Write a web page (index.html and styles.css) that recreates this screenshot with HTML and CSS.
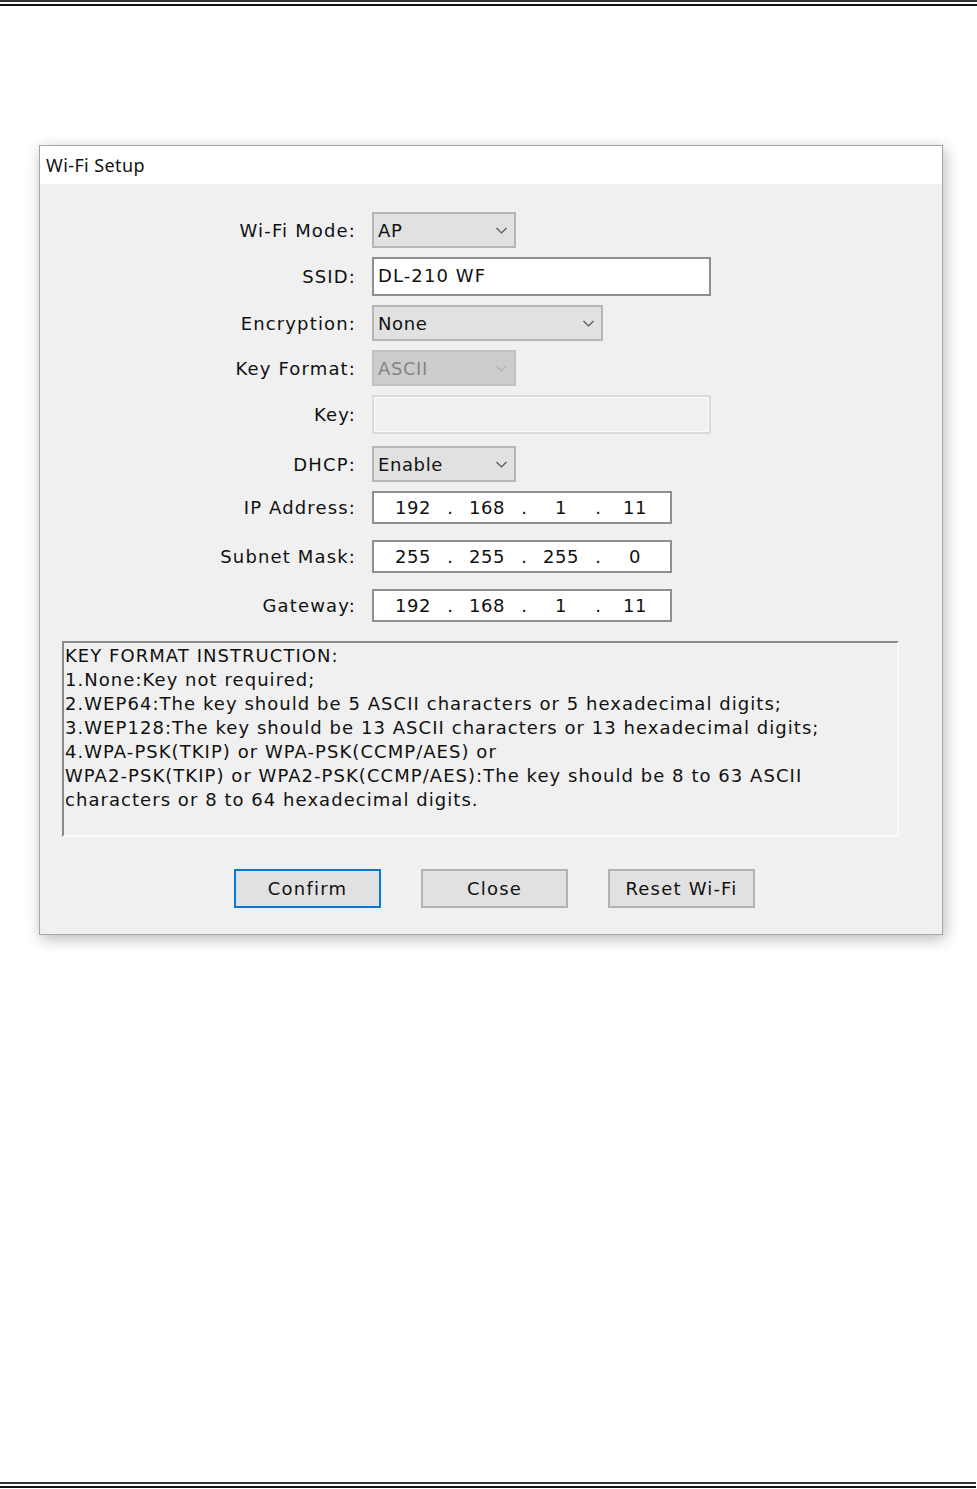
FILE: index.html
```html
<!DOCTYPE html>
<html lang="en">
<head>
    <meta charset="UTF-8">
    <meta name="viewport" content="width=device-width, initial-scale=1.0">
    <title>Wi-Fi Setup</title>
    <link rel="stylesheet" href="styles.css">
</head>
<body>
    <div class="rule rule-top"></div>

    <div class="dialog">
        <div class="title-bar">Wi-Fi Setup</div>
        <div class="dialog-body">
            <div class="form">
                <div class="row">
                    <label class="label">Wi-Fi Mode:</label>
                    <div class="select small"><span>AP</span><svg class="chev" viewBox="0 0 12 7"><path d="M1 1 L6 6 L11 1"/></svg></div>
                </div>
                <div class="row">
                    <label class="label">SSID:</label>
                    <div class="input wide">DL-210 WF</div>
                </div>
                <div class="row">
                    <label class="label">Encryption:</label>
                    <div class="select medium"><span>None</span><svg class="chev" viewBox="0 0 12 7"><path d="M1 1 L6 6 L11 1"/></svg></div>
                </div>
                <div class="row">
                    <label class="label">Key Format:</label>
                    <div class="select small disabled"><span>ASCII</span><svg class="chev" viewBox="0 0 12 7"><path d="M1 1 L6 6 L11 1"/></svg></div>
                </div>
                <div class="row">
                    <label class="label">Key:</label>
                    <div class="input wide disabled"></div>
                </div>
                <div class="row gap-lg">
                    <label class="label">DHCP:</label>
                    <div class="select small"><span>Enable</span><svg class="chev" viewBox="0 0 12 7"><path d="M1 1 L6 6 L11 1"/></svg></div>
                </div>
                <div class="row">
                    <label class="label">IP Address:</label>
                    <div class="ip">
                        <span class="seg">192</span><span class="dot">.</span>
                        <span class="seg">168</span><span class="dot">.</span>
                        <span class="seg">1</span><span class="dot">.</span>
                        <span class="seg">11</span>
                    </div>
                </div>
                <div class="row gap-ip">
                    <label class="label">Subnet Mask:</label>
                    <div class="ip">
                        <span class="seg">255</span><span class="dot">.</span>
                        <span class="seg">255</span><span class="dot">.</span>
                        <span class="seg">255</span><span class="dot">.</span>
                        <span class="seg">0</span>
                    </div>
                </div>
                <div class="row gap-ip">
                    <label class="label">Gateway:</label>
                    <div class="ip">
                        <span class="seg">192</span><span class="dot">.</span>
                        <span class="seg">168</span><span class="dot">.</span>
                        <span class="seg">1</span><span class="dot">.</span>
                        <span class="seg">11</span>
                    </div>
                </div>
            </div>

            <div class="instructions">
                KEY FORMAT INSTRUCTION:<br>
                1.None:Key not required;<br>
                2.WEP64:The key should be 5 ASCII characters or 5 hexadecimal digits;<br>
                3.WEP128:The key should be 13 ASCII characters or 13 hexadecimal digits;<br>
                4.WPA-PSK(TKIP) or WPA-PSK(CCMP/AES) or<br>
                WPA2-PSK(TKIP) or WPA2-PSK(CCMP/AES):The key should be 8 to 63 ASCII<br>
                characters or 8 to 64 hexadecimal digits.
            </div>

            <div class="buttons">
                <button class="btn default">Confirm</button>
                <button class="btn">Close</button>
                <button class="btn">Reset Wi-Fi</button>
            </div>
        </div>
    </div>

    <div class="rule rule-bottom"></div>
</body>
</html>
```

FILE: styles.css
```css
html, body {
    height: 100%;
}
body {
    margin: 0;
    background-color: #fff;
    font-family: "DejaVu Sans", Verdana, sans-serif;
    font-size: 18px;
    color: #111;
    display: flex;
    flex-direction: column;
}
.rule {
    height: 2px;
    border-bottom: 2px solid #111;
    border-top: 2px solid #333;
}
.rule-top {
    margin-top: 0;
}
.rule-bottom {
    margin-top: auto;
    margin-bottom: 1px;
    margin-right: 1px;
}
.dialog {
    box-sizing: border-box;
    width: 904px;
    margin: 139px 0 0 39px;
    border: 1px solid #a6a6a6;
    background-color: #f0f0f0;
    box-shadow: 2px 4px 14px rgba(0, 0, 0, 0.28);
}
.title-bar {
    height: 38px;
    background-color: #fff;
    font-family: "Noto Sans", "Open Sans", sans-serif;
    font-size: 18px;
    line-height: 38px;
    padding-left: 6px;
    letter-spacing: 0.4px;
}
.dialog-body {
    padding: 28px 0 26px 0;
}
.form {
    display: flex;
    flex-direction: column;
    gap: 9px;
}
.row {
    display: flex;
    align-items: center;
    gap: 16px;
}
.row.gap-lg {
    margin-top: 3px;
}
.row.gap-ip {
    margin-top: 7px;
}
.label {
    width: 316px;
    text-align: right;
    letter-spacing: 1.15px;
}
.select {
    box-sizing: border-box;
    height: 36px;
    background-color: #e1e1e1;
    border: 2px solid #b6b6b6;
    display: flex;
    align-items: center;
    justify-content: space-between;
    padding: 0 6px 0 4px;
    letter-spacing: 0.6px;
}
.select.small {
    width: 144px;
}
.select.medium {
    width: 231px;
}
.select.disabled {
    background-color: #cccccc;
    border-color: #c2c2c2;
    color: #858585;
}
.chev {
    width: 13px;
    height: 7px;
    fill: none;
    stroke: #555;
    stroke-width: 1.2;
}
.select.disabled .chev {
    stroke: #b0b0b0;
}
.input {
    box-sizing: border-box;
    height: 39px;
    background-color: #fff;
    border: 2px solid #8f8f8f;
    padding: 0 4px;
    line-height: 34px;
    letter-spacing: 1.1px;
}
.input.wide {
    width: 339px;
}
.input.disabled {
    background-color: #f0f0f0;
    border-color: #dadada;
    box-shadow: inset 0 0 0 1px #fbfbfb;
}
.ip {
    box-sizing: border-box;
    width: 300px;
    height: 33px;
    background-color: #fff;
    border: 2px solid #8f8f8f;
    display: flex;
    align-items: center;
    padding-left: 8px;
}
.seg {
    width: 62px;
    text-align: center;
    letter-spacing: 0.6px;
}
.dot {
    width: 12px;
    text-align: center;
}
.instructions {
    box-sizing: border-box;
    width: 837px;
    height: 196px;
    margin: 19px 0 0 22px;
    border: 2px solid;
    border-color: #8a8a8a #f9f9f9 #f9f9f9 #8a8a8a;
    padding: 1px 0 0 1px;
    line-height: 24px;
    letter-spacing: 1.05px;
    white-space: nowrap;
}
.buttons {
    display: flex;
    gap: 40px;
    margin: 32px 0 0 194px;
}
.btn {
    box-sizing: border-box;
    width: 147px;
    height: 39px;
    background-color: #e1e1e1;
    border: 2px solid #b3b3b3;
    font-family: "DejaVu Sans", Verdana, sans-serif;
    font-size: 18px;
    color: #111;
    letter-spacing: 1.2px;
    padding: 0;
}
.btn.default {
    border-color: #0a78d7;
}
```
